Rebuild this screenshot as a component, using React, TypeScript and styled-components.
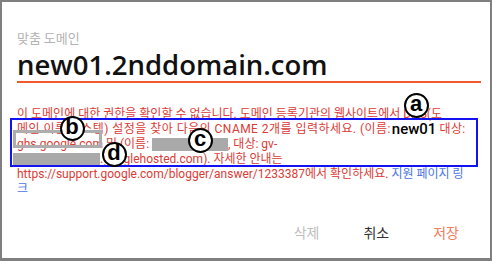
import React from 'react'
import styled, { createGlobalStyle } from 'styled-components';

const GlobalStyle = createGlobalStyle`
    html, body {
        margin: 0;
        padding: 0;
        background: #ffffff;
    }
`

const Frame = styled.div`
    position: relative;
    box-sizing: border-box;
    width: 492px;
    height: 261px;
    border: 2px solid #7f7f7f;
    border-bottom-width: 3px;
    background: #ffffff;
    overflow: hidden;
`

const Dialog = styled.div`
    display: flex;
    flex-direction: column;
    height: 100%;
    box-sizing: border-box;
    padding: 27px 9px 0 15px;
`

const Label = styled.div`
    font-family: "Noto Sans CJK KR", "Noto Sans", sans-serif;
    font-size: 13px;
    line-height: 17px;
    color: #b3b3b3;
`

const TitleField = styled.div`
    margin-top: 3px;
    font-family: "Open Sans", "Noto Sans", sans-serif;
    font-weight: 600;
    font-size: 27.5px;
    line-height: 31px;
    color: #111111;
    padding-bottom: 1px;
    border-bottom: 2px solid #f4592e;
`

const Message = styled.div`
    margin-top: 24px;
    font-family: Roboto, "Noto Sans CJK KR", sans-serif;
    font-size: 12px;
    line-height: 15px;
    color: #dc3b36;
`

const Line = styled.div<{ wide?: boolean }>`
    white-space: nowrap;
    letter-spacing: ${({ wide }) => wide ? '0.45px' : 'normal'};
`

const Link = styled.span`
    color: #4a74e4;
`

// black label pasted over the CNAME name
const NameSlot = styled.span`
    display: inline-block;
    vertical-align: top;
    margin-left: 1px;
    padding-right: 3px;
    background: #ffffff;
    font-family: Roboto, sans-serif;
    font-weight: 500;
    font-size: 15px;
    line-height: 15px;
    letter-spacing: 0;
    color: #000000;
`

const Redacted = styled.span<{ w: number; shift?: number }>`
    display: inline-block;
    vertical-align: top;
    width: ${({ w }) => w}px;
    height: 13px;
    margin-top: 1px;
    margin-left: ${({ shift }) => shift || 0}px;
    background: #a9a9a9;
`

const Actions = styled.div`
    margin-top: auto;
    display: flex;
    justify-content: flex-end;
    gap: 44px;
    padding: 0 22px 17px 0;
`

const ActionButton = styled.span<{ tone: 'muted' | 'plain' | 'accent' }>`
    font-family: "Noto Sans CJK KR", sans-serif;
    font-size: 14px;
    line-height: 18px;
    color: ${({ tone }) => tone === 'muted' ? '#bdbdbd' : tone === 'accent' ? '#f47b57' : '#333333'};
    cursor: pointer;
`

// annotation layer drawn over the dialog
const HighlightBox = styled.div`
    position: absolute;
    left: 8px;
    top: 116px;
    width: 468px;
    height: 49px;
    box-sizing: border-box;
    border: 2px solid #1212f2;
`

const FrameBox = styled.div`
    position: absolute;
    left: 11px;
    top: 128px;
    width: 89px;
    height: 18px;
    box-sizing: border-box;
    border: 3px solid #adadad;
`

const Marker = styled.div<{ x: number; y: number }>`
    position: absolute;
    left: ${({ x }) => x - 14.5}px;
    top: ${({ y }) => y - 14.5}px;
    width: 25px;
    height: 25px;
    box-sizing: border-box;
    border: 2px solid #000000;
    border-radius: 50%;
    background: #ffffff;
    display: flex;
    align-items: center;
    justify-content: center;
    font-family: "Liberation Sans", Arial, sans-serif;
    font-weight: 700;
    font-size: 22px;
    line-height: 1;
    color: #000000;
    padding-bottom: 3px;
`

const App = () => {
    return (
        <>
            <GlobalStyle />
            <Frame>
                <Dialog>
                    <Label>맞춤 도메인</Label>
                    <TitleField>new01.2nddomain.com</TitleField>
                    <Message>
                        <Line>이 도메인에 대한 권한을 확인할 수 없습니다. 도메인 등록기관의 웹사이트에서 DNS(도</Line>
                        <Line wide>메인 이름 시스템) 설정을 찾아 다음의 CNAME 2개를 입력하세요. (이름:<NameSlot>new01</NameSlot>대상:</Line>
                        <Line>ghs.google.com 및 (이름: <Redacted w={76} />, 대상: gv-</Line>
                        <Line><Redacted w={87} shift={-4} />.googlehosted.com). 자세한 안내는</Line>
                        <Line>https://support.google.com/blogger/answer/1233387에서 확인하세요. <Link>지원 페이지 링</Link></Line>
                        <Line><Link>크</Link></Line>
                    </Message>
                    <Actions>
                        <ActionButton tone="muted">삭제</ActionButton>
                        <ActionButton tone="plain">취소</ActionButton>
                        <ActionButton tone="accent">저장</ActionButton>
                    </Actions>
                </Dialog>
                <HighlightBox />
                <FrameBox />
                <Marker x={416} y={105}>a</Marker>
                <Marker x={72} y={128}>b</Marker>
                <Marker x={200} y={140}>c</Marker>
                <Marker x={114} y={154}>d</Marker>
            </Frame>
        </>
    )
};

export default App
